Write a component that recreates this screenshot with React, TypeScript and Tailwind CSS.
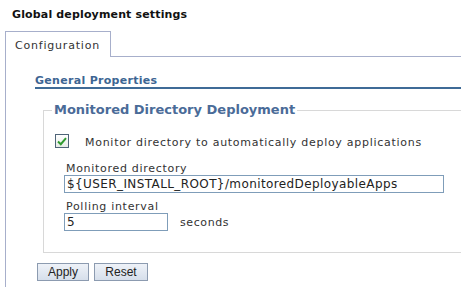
export default function App() {
  return (
    <div className="w-[461px] h-[294px] overflow-hidden bg-white font-['DejaVu_Sans',sans-serif] text-[11px] leading-[13px] text-[#222]">
      {/* Page title */}
      <h1 className="pt-[8px] pl-[12px] font-bold tracking-[0.15px] text-[#111]">Global deployment settings</h1>

      {/* Tab strip */}
      <div className="mt-[10px] flex w-[600px] items-stretch">
        <div className="ml-[5px] h-[26px] w-[106px] border-l border-t border-r border-[#a7afcb] pl-[9px] pt-[7px] tracking-[0.8px] text-[#333]">
          Configuration
        </div>
        <div className="flex-1 border-b border-[#a7afcb]" />
      </div>

      {/* Tab panel */}
      <div className="ml-[5px] h-[230px] w-[600px] border-l border-[#a7afcb] pt-[17px]">
        <div className="ml-[29px] border-b-2 border-[#3f6b97] font-bold tracking-[0.3px] text-[#3d6593]">General Properties</div>

        <fieldset className="ml-[37px] mt-[13px] w-[520px] border border-[#d8d8d8] pb-[21px]">
          <legend className="ml-[8px] px-[2px] text-[13px] leading-[16px] font-bold text-[#4a6b98]">
            Monitored Directory Deployment
          </legend>

          <div className="mt-[16px] ml-[11px] flex items-start gap-[16px]">
            <div className="flex h-[14px] w-[14px] items-center justify-center border border-[#4f6478] bg-gradient-to-b from-[#ffffff] to-[#e6ebe6]">
              <svg width="10" height="9" viewBox="0 0 10 9">
                <path d="M1 4.5 L3.8 7.2 L9 1.2" fill="none" stroke="#2f9a2f" strokeWidth="2" />
              </svg>
            </div>
            <span className="pt-[2px] tracking-[0.72px] text-[#333]">Monitor directory to automatically deploy applications</span>
          </div>

          <div className="mt-[13px] pl-[22px] tracking-[0.7px] text-[#333]">Monitored directory</div>
          <div className="ml-[20px] flex h-[18px] w-[380px] items-center border border-[#7f9db9] pl-[2px] text-[12px] tracking-[0.4px] text-[#222]">
            {'${USER_INSTALL_ROOT}/monitoredDeployableApps'}
          </div>

          <div className="mt-[7px] pl-[22px] tracking-[0.7px] text-[#333]">Polling interval</div>
          <div className="ml-[20px] flex items-center gap-[12px]">
            <div className="flex h-[18px] w-[104px] items-center border border-[#7f9db9] pl-[2px] text-[12px] text-[#222]">
              5
            </div>
            <span className="tracking-[0.6px] text-[#333]">seconds</span>
          </div>
        </fieldset>

        <div className="ml-[31px] mt-[10px] flex gap-[5px] font-['Liberation_Sans',sans-serif] text-[12px] text-[#222]">
          <button className="h-[18px] w-[52px] border border-[#8c9bb0] bg-gradient-to-b from-[#eef2f8] to-[#d6dfeb]">Apply</button>
          <button className="h-[18px] w-[54px] border border-[#8c9bb0] bg-gradient-to-b from-[#eef2f8] to-[#d6dfeb]">Reset</button>
        </div>
      </div>
    </div>
  );
}
